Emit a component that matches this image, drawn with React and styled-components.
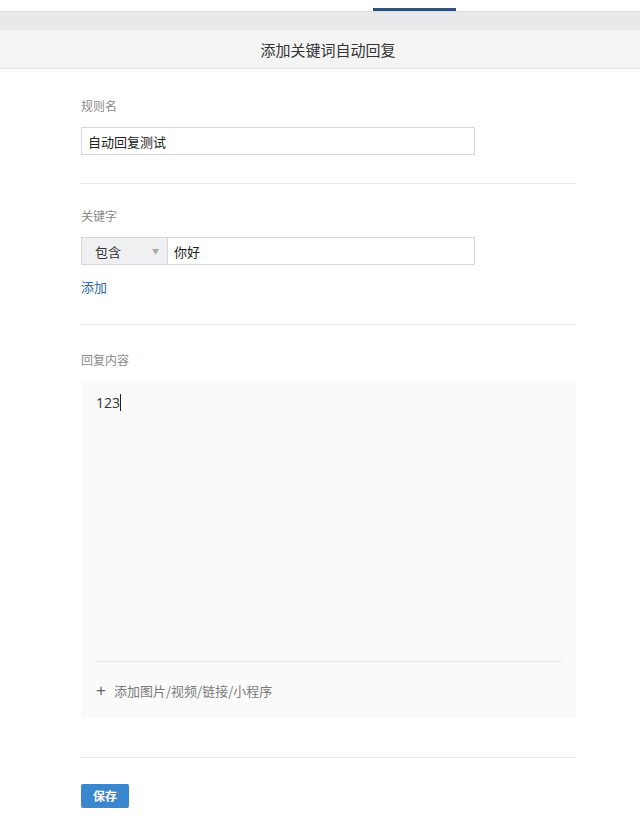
import React from "react";
import styled, { createGlobalStyle } from "styled-components";

const Global = createGlobalStyle`
  html, body { margin: 0; padding: 0; background: #fff; }
  body { font-family: "Microsoft YaHei", "Noto Sans CJK SC", "Liberation Sans", sans-serif; color: #333; }
  * { box-sizing: border-box; }
`;

const Page = styled.div`
  width: 640px;
  min-height: 828px;
  background: #fff;
`;

const TopStrip = styled.div`
  height: 12px;
  background: #fff;
  border-bottom: 1px solid #dcdde0;
  position: relative;
`;

const TabMark = styled.div`
  position: absolute;
  left: 373px;
  width: 83px;
  bottom: 0;
  height: 3px;
  background: #2e5079;
`;

const Band = styled.div`
  height: 18px;
  background: #e8e9eb;
`;

const Header = styled.div`
  height: 39px;
  background: #f4f4f5;
  border-bottom: 1px solid #e3e4e6;
  display: flex;
  align-items: center;
  justify-content: center;
  padding-left: 16px;
  font-size: 15px;
  color: #333;
`;

const Body = styled.div`
  padding: 0 64px 0 81px;
`;

const Section = styled.div`
  padding: ${(p) => p.$pt}px 0 ${(p) => p.$pb}px;
  border-bottom: ${(p) => (p.$last ? "none" : "1px solid #e7e8ea")};
`;

const Label = styled.div`
  font-size: 12px;
  color: #8a8a8a;
  line-height: 16px;
  margin-bottom: 13px;
`;

const InputRow = styled.div`
  display: flex;
  width: 394px;
  height: 28px;
  border: 1px solid #d7d8da;
  background: #fff;
`;

const Select = styled.div`
  width: 86px;
  background: #eef0f2;
  border-right: 1px solid #d7d8da;
  display: flex;
  align-items: center;
  justify-content: space-between;
  padding: 0 8px 0 13px;
  font-size: 13px;
  color: #333;
`;

const Arrow = styled.span`
  font-size: 7px;
  color: #a8a8a8;
`;

const Field = styled.div`
  flex: 1;
  display: flex;
  align-items: center;
  padding: 0 6px;
  font-size: 13px;
  color: #222;
`;

const LinkText = styled.div`
  margin-top: 13px;
  font-size: 13px;
  color: #2b6aa6;
  line-height: 18px;
`;

const Editor = styled.div`
  width: 495px;
  height: 337px;
  background: #fafafa;
  display: flex;
  flex-direction: column;
  padding: 0 14px 0 15px;
`;

const EditorText = styled.div`
  flex: 1;
  padding-top: 13px;
  font-size: 14px;
  color: #333;
  line-height: 18px;
  font-family: "Open Sans", "Noto Sans", sans-serif;
`;

const Caret = styled.span`
  display: inline-block;
  width: 1px;
  height: 17px;
  background: #222;
  vertical-align: -3px;
`;

const EditorFoot = styled.div`
  height: 57px;
  border-top: 1px solid #e6e7e9;
  display: flex;
  align-items: center;
  gap: 8px;
  font-size: 13px;
  color: #7a7a7a;
`;

const Plus = styled.span`
  font-size: 17px;
  color: #666;
  line-height: 1;
  font-family: "Liberation Sans", sans-serif;
`;

const SaveButton = styled.button`
  width: 48px;
  height: 24px;
  border: none;
  border-radius: 2px;
  background: #3a87cd;
  color: #fff;
  font-size: 12px;
  font-weight: bold;
  font-family: inherit;
  padding: 0;
`;

export default function App() {
  return (
    <Page>
      <Global />
      <TopStrip>
        <TabMark />
      </TopStrip>
      <Band />
      <Header>添加关键词自动回复</Header>
      <Body>
        <Section $pt={29} $pb={28}>
          <Label>规则名</Label>
          <InputRow>
            <Field>自动回复测试</Field>
          </InputRow>
        </Section>
        <Section $pt={24} $pb={28}>
          <Label>关键字</Label>
          <InputRow>
            <Select>
              包含
              <Arrow>▼</Arrow>
            </Select>
            <Field>你好</Field>
          </InputRow>
          <LinkText>添加</LinkText>
        </Section>
        <Section $pt={27} $pb={39}>
          <Label>回复内容</Label>
          <Editor>
            <EditorText>
              123<Caret />
            </EditorText>
            <EditorFoot>
              <Plus>+</Plus>
              添加图片/视频/链接/小程序
            </EditorFoot>
          </Editor>
        </Section>
        <Section $pt={24} $pb={20} $last>
          <SaveButton>保存</SaveButton>
        </Section>
      </Body>
    </Page>
  );
}
